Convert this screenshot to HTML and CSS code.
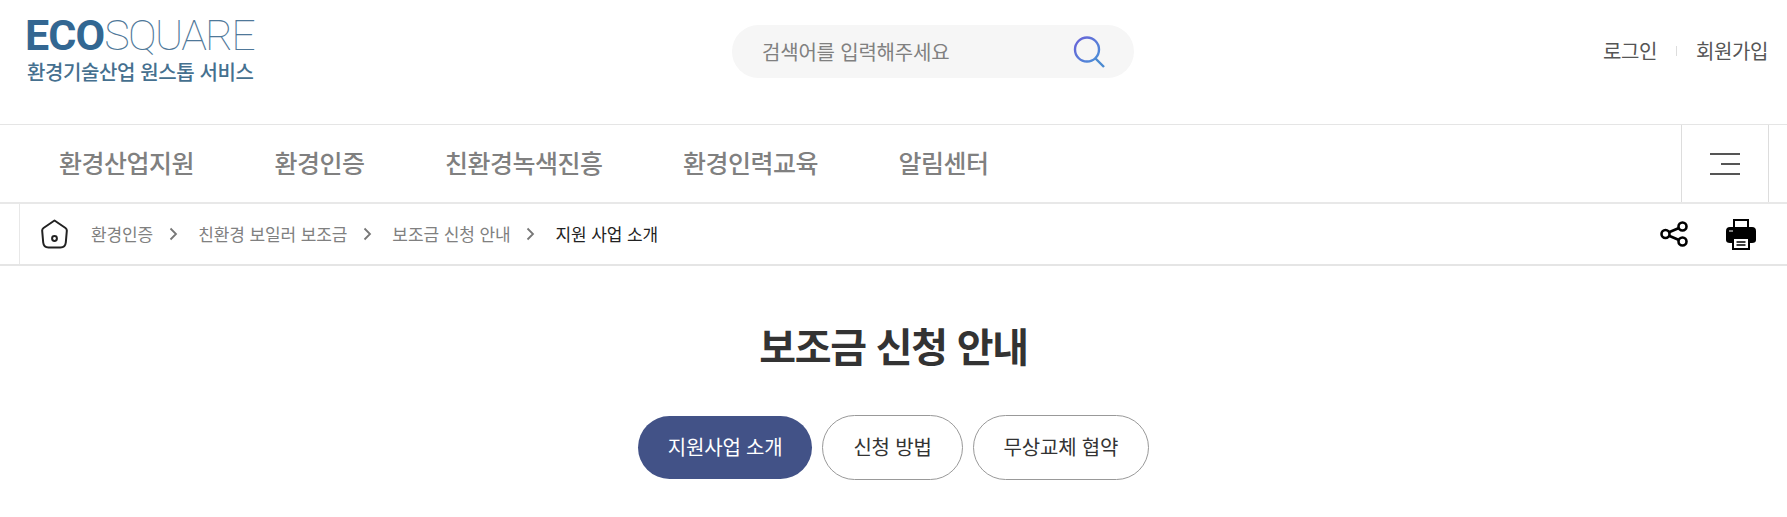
FILE: index.html
```html
<!DOCTYPE html>
<html lang="ko">
<head>
    <meta charset="UTF-8">
    <meta name="viewport" content="width=device-width, initial-scale=1.0">
    <title>보조금 신청 안내</title>
    <link rel="stylesheet" href="styles.css">
</head>
<body>
    <header class="top">
        <a class="logo">
            <span class="logo-name"><b>ECO</b>SQUARE</span>
            <span class="logo-sub">환경기술산업 원스톱 서비스</span>
        </a>
        <div class="search">
            <span class="search-text">검색어를 입력해주세요</span>
            <svg class="search-icon" width="34" height="34" viewBox="0 0 34 34" fill="none">
                <defs>
                    <linearGradient id="lens" x1="0" y1="0" x2="1" y2="1">
                        <stop offset="0" stop-color="#6a62d8"/>
                        <stop offset="1" stop-color="#4a90d8"/>
                    </linearGradient>
                </defs>
                <circle cx="15" cy="14.5" r="12" stroke="url(#lens)" stroke-width="2.4"/>
                <path d="M23.5 23.5 L32 32" stroke="#4a8ad0" stroke-width="2.4"/>
            </svg>
        </div>
        <div class="member">
            <span>로그인</span>
            <i class="member-bar"></i>
            <span>회원가입</span>
        </div>
    </header>

    <nav class="gnb">
        <ul class="gnb-list">
            <li>환경산업지원</li>
            <li>환경인증</li>
            <li>친환경녹색진흥</li>
            <li>환경인력교육</li>
            <li>알림센터</li>
        </ul>
        <div class="menu-btn">
            <span class="menu-line"></span>
            <span class="menu-line short"></span>
            <span class="menu-line"></span>
        </div>
    </nav>

    <div class="crumbs">
        <div class="crumb-list">
            <svg class="home" width="28" height="30" viewBox="0 0 28 30" fill="none" stroke="#222" stroke-width="2">
                <path d="M13.500 1.500 L24.500 9 Q26 10 25.800 12 L24.800 23.500 Q24.300 28.500 19.500 28.500 H7.500 Q2.700 28.500 2.200 23.500 L1.200 12 Q1 10 2.500 9 Z" stroke-linejoin="round"/>
                <circle cx="13.500" cy="19.500" r="2.400"/>
            </svg>
            <span class="crumb">환경인증</span>
            <svg class="arrow" width="9" height="14" viewBox="0 0 9 14" fill="none"><path d="M1.500 1.500 L7 7 L1.500 12.500" stroke="#777" stroke-width="1.800"/></svg>
            <span class="crumb">친환경 보일러 보조금</span>
            <svg class="arrow" width="9" height="14" viewBox="0 0 9 14" fill="none"><path d="M1.500 1.500 L7 7 L1.500 12.500" stroke="#777" stroke-width="1.800"/></svg>
            <span class="crumb">보조금 신청 안내</span>
            <svg class="arrow" width="9" height="14" viewBox="0 0 9 14" fill="none"><path d="M1.500 1.500 L7 7 L1.500 12.500" stroke="#777" stroke-width="1.800"/></svg>
            <span class="crumb now">지원 사업 소개</span>
        </div>
        <div class="crumb-tools">
            <svg width="28" height="26" viewBox="0 0 28 26" fill="none" stroke="#000" stroke-width="2.600">
                <circle cx="5.500" cy="13" r="4"/>
                <circle cx="22.500" cy="5.500" r="4"/>
                <circle cx="22.500" cy="20.500" r="4"/>
                <path d="M9 11.300 L19 7 M9 14.700 L19 19"/>
            </svg>
            <svg width="30" height="32" viewBox="0 0 30 32">
                <path d="M7 1 H23 V9 H21 V3 H9 V9 H7 Z" fill="#000"/>
                <path d="M4 9 H26 Q30 9 30 13 V22 Q30 25 26 25 H24 V19 H6 V25 H4 Q0 25 0 22 V13 Q0 9 4 9 Z" fill="#000"/>
                <path d="M3 13 H7" stroke="#fff" stroke-width="1"/>
                <path d="M7 20 H23 V31 H7 Z" fill="#fff" stroke="#000" stroke-width="2"/>
                <path d="M10.500 24 H19.500 M10.500 27 H19.500" stroke="#000" stroke-width="1.500"/>
            </svg>
        </div>
    </div>

    <main class="content">
        <h1 class="title">보조금 신청 안내</h1>
        <div class="tabs">
            <a class="tab on">지원사업 소개</a>
            <a class="tab">신청 방법</a>
            <a class="tab">무상교체 협약</a>
        </div>
    </main>
</body>
</html>
```

FILE: styles.css
```css
* {
    box-sizing: border-box;
}
html, body {
    height: 100%;
}
body {
    font-family: "Noto Sans CJK KR", "Noto Sans", sans-serif;
    margin: 0;
    padding: 0;
    background-color: #ffffff;
    color: #333;
    overflow: hidden;
}
ul {
    list-style: none;
    margin: 0;
    padding: 0;
}

/* top */
.top {
    height: 124px;
    padding: 0 19px 0 25px;
    display: grid;
    grid-template-columns: 707px 402px 1fr;
    align-items: start;
}
.logo {
    display: flex;
    flex-direction: column;
    padding-top: 11px;
}
.logo-name {
    font-family: Roboto, sans-serif;
    font-size: 43px;
    font-weight: 100;
    line-height: 48px;
    letter-spacing: -1.8px;
    color: #4f7899;
}
.logo-name b {
    font-weight: 700;
    letter-spacing: -0.9px;
    color: #336792;
}
.logo-sub {
    padding-left: 2px;
    font-size: 20px;
    font-weight: 500;
    line-height: 25px;
    letter-spacing: -0.4px;
    color: #45708f;
}
.search {
    margin-top: 25px;
    height: 53px;
    border-radius: 27px;
    background-color: #f6f6f6;
    display: flex;
    align-items: center;
    justify-content: space-between;
    padding: 0 28px 0 30px;
}
.search-text {
    font-size: 20px;
    color: #808080;
    letter-spacing: -0.2px;
}
.search-icon {
    margin-top: 1px;
}
.member {
    margin-top: 36px;
    display: flex;
    align-items: center;
    justify-content: flex-end;
    gap: 19px;
    font-size: 20px;
    line-height: 30px;
    color: #555;
    letter-spacing: -0.4px;
}
.member-bar {
    width: 1px;
    height: 10px;
    background-color: #ddd;
}

/* gnb */
.gnb {
    height: 80px;
    border-top: 1px solid #e5e5e5;
    border-bottom: 2px solid #e8e8e8;
    display: flex;
    justify-content: space-between;
    padding: 0 18px 0 59px;
}
.gnb-list {
    display: flex;
    align-items: center;
    gap: 80.5px;
    padding-bottom: 3px;
    font-size: 25px;
    font-weight: 500;
    color: #808080;
    letter-spacing: -0.5px;
}
.menu-btn {
    width: 88px;
    border-left: 1px solid #ddd;
    border-right: 1px solid #ddd;
    display: flex;
    flex-direction: column;
    align-items: flex-end;
    justify-content: center;
    gap: 8px;
    padding-right: 28px;
}
.menu-line {
    display: block;
    width: 30px;
    height: 2px;
    background-color: #555;
}
.menu-line.short {
    width: 19px;
}

/* breadcrumb */
.crumbs {
    height: 62px;
    border-bottom: 2px solid #e5e5e5;
    display: flex;
    align-items: center;
    justify-content: space-between;
    padding: 0 31px 0 0;
}
.crumb-list {
    height: 100%;
    margin-left: 19px;
    padding-left: 21px;
    border-left: 1px solid #e8e8e8;
    display: flex;
    align-items: center;
}
.home {
    margin-right: 22px;
}
.crumb {
    padding-bottom: 2px;
    font-size: 17px;
    color: #808080;
    letter-spacing: -0.1px;
}
.crumb.now {
    color: #222;
}
.arrow {
    margin: 0 20px 0 16px;
}
.crumb-tools {
    display: flex;
    align-items: center;
    gap: 38px;
}

/* content */
.content {
    display: flex;
    flex-direction: column;
    align-items: center;
}
.title {
    margin: 49px 0 0;
    font-size: 40px;
    font-weight: 700;
    line-height: 60px;
    letter-spacing: -1.3px;
    color: #333;
}
.tabs {
    margin-top: 40px;
    display: flex;
    align-items: center;
    gap: 10px;
}
.tab {
    height: 65px;
    padding: 0 30px 2px;
    border: 1px solid #999;
    border-radius: 33px;
    background-color: #fff;
    display: flex;
    align-items: center;
    font-size: 20px;
    color: #333;
    letter-spacing: -0.2px;
}
.tab.on {
    height: 63px;
    border: 0;
    background-color: #425287;
    color: #fff;
}
```
